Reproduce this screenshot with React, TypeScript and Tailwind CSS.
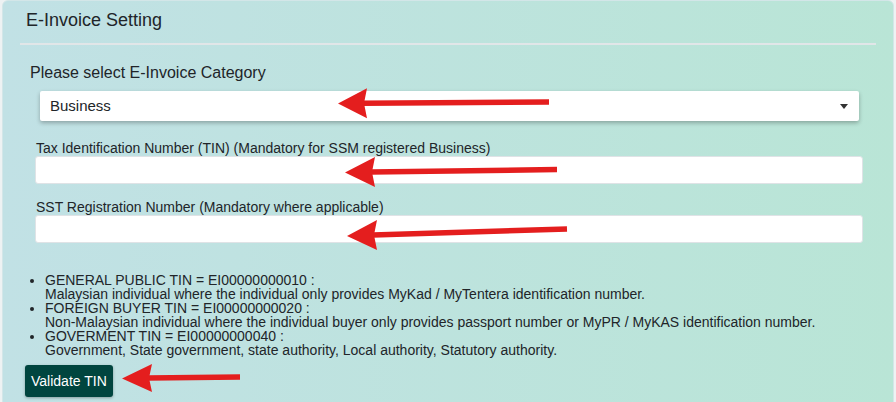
import React from "react";

function Arrow({ tip, head, tail, half }: { tip: [number, number]; head: number; tail: [number, number]; half: number }) {
  const [tx, ty] = tip;
  const slope = (tail[1] - ty) / (tail[0] - tx);
  const hy = ty + slope * (head - tx);
  return (
    <g>
      <line x1={head - 4} y1={hy} x2={tail[0]} y2={tail[1]} stroke="#e41e1e" strokeWidth={5.5} />
      <polygon points={`${tx},${ty} ${head},${hy - half} ${head - 3},${hy} ${head},${hy + half}`} fill="#e41e1e" />
    </g>
  );
}

export default function App() {
  const font = { fontFamily: '"Liberation Sans", Arial, sans-serif' };
  return (
    <div className="relative w-[896px] h-[402px] overflow-hidden bg-[#eef2f3]" style={font}>
      <div className="ml-[2px] w-[892px] h-[430px] rounded-[6px] border border-[#d3e6e8] bg-linear-to-r from-[#c1e1e5] to-[#b9e5d6] text-[#212529]">
        <div className="h-[42px] pl-[23px] pt-[8px] text-[18px] leading-[22px]">E-Invoice Setting</div>
        <div className="mx-[17px] h-[2px] bg-[#e1e6e8]" />
        <div className="pl-[27px] pt-[18px] text-[16px] leading-[19px]">Please select E-Invoice Category</div>
        <div className="ml-[37px] mr-[34px] mt-[9px] h-[30px] bg-white rounded-[2px] shadow-[0_2px_4px_rgba(0,0,0,0.28)] flex items-center justify-between pl-[10px] pr-[11px]">
          <span className="text-[15px] leading-[18px]">Business</span>
          <span className="w-0 h-0 border-l-[4px] border-r-[4px] border-t-[5px] border-l-transparent border-r-transparent border-t-[#333]" />
        </div>
        <div className="pl-[33px] pt-[19px] text-[14px] leading-[16px]">Tax Identification Number (TIN) (Mandatory for SSM registered Business)</div>
        <div className="ml-[32px] mr-[30px] h-[28px] bg-white rounded-[3px] border border-[#dfe3e6]" />
        <div className="pl-[33px] pt-[15px] text-[14px] leading-[16px]">SST Registration Number (Mandatory where applicable)</div>
        <div className="ml-[32px] mr-[30px] h-[28px] bg-white rounded-[3px] border border-[#dfe3e6]" />
        <ul className="list-disc pl-[42px] mt-[30px] text-[14px] leading-[14px]">
          <li>
            GENERAL PUBLIC TIN = EI00000000010 :
            <br />
            Malaysian individual where the individual only provides MyKad / MyTentera identification number.
          </li>
          <li>
            FOREIGN BUYER TIN = EI00000000020 :
            <br />
            Non-Malaysian individual where the individual buyer only provides passport number or MyPR / MyKAS identification number.
          </li>
          <li>
            GOVERMENT TIN = EI00000000040 :
            <br />
            Government, State government, state authority, Local authority, Statutory authority.
          </li>
        </ul>
        <div className="pl-[22px] mt-[8px]">
          <button className="h-[32px] px-[6px] rounded-[3px] bg-[#00453f] text-white text-[14px] leading-[16px] shadow-[0_1px_3px_rgba(0,0,0,0.3)]">
            Validate TIN
          </button>
        </div>
      </div>
      <svg className="absolute inset-0 pointer-events-none" width="896" height="402">
        <Arrow tip={[338, 103.5]} head={367} tail={[549, 102]} half={15} />
        <Arrow tip={[345, 172.5]} head={375} tail={[557, 169.5]} half={15} />
        <Arrow tip={[347, 236]} head={377} tail={[567, 229]} half={15} />
        <Arrow tip={[122, 378.5]} head={152} tail={[240, 377]} half={14} />
      </svg>
    </div>
  );
}
